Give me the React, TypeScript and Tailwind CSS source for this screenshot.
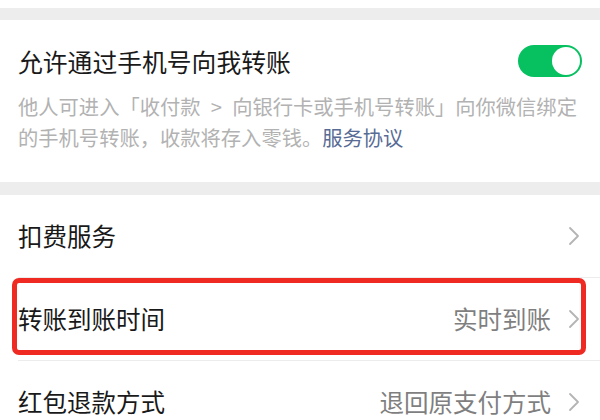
import { ReactNode } from "react";

const font = { fontFamily: '"Noto Sans CJK SC", "Noto Sans", sans-serif' };

function Chevron() {
  return (
    <svg width="12" height="20" viewBox="0 0 12 20" className="shrink-0">
      <polyline points="2,2 10,10 2,18" fill="none" stroke="#b4b4b4" strokeWidth="1.8" strokeLinecap="round" strokeLinejoin="round" />
    </svg>
  );
}

interface RowProps {
  label: string;
  value?: string;
  last?: boolean;
  children?: ReactNode;
}

function Row({ label, value, last, children }: RowProps) {
  return (
    <div className="relative">
      <div className="flex h-[82px] items-center pl-[18px] pr-[20px]">
        <span className="flex-1 text-[24.5px] text-[#191919]">{label}</span>
        {value && <span className="mr-[17px] text-[24.5px] text-[#7f7f7f]">{value}</span>}
        <Chevron />
      </div>
      {!last && <div className="ml-[18px] h-px bg-[#ececec]" />}
      {children}
    </div>
  );
}

export default function App() {
  return (
    <div className="h-[420px] w-[600px] overflow-hidden bg-[#ededed]" style={font}>
      <div className="h-2 bg-white" />
      <div className="h-3" />

      <section className="bg-white px-[18px] pt-[25px] pb-[29px]">
        <div className="flex h-8 items-center justify-between">
          <span className="text-[24.8px] leading-none text-[#191919]">允许通过手机号向我转账</span>
          <div className="flex h-8 w-16 items-center justify-end rounded-full bg-[#07c160] p-[2px]">
            <div className="h-7 w-7 rounded-full bg-white" />
          </div>
        </div>
        <p className="mt-[14px] whitespace-nowrap text-[20.3px] leading-[31px] text-[#b2b2b2]">
          他人可进入「收付款{"\u2002"}&gt;{"\u2002"}向银行卡或手机号转账」向你微信绑定
          <br />
          的手机号转账，收款将存入零钱。<span className="text-[#576b95]">服务协议</span>
        </p>
      </section>

      <div className="h-[13px]" />

      <div className="bg-white">
        <Row label="扣费服务" />
        <Row label="转账到账时间" value="实时到账">
          <div className="absolute left-[12px] top-0 h-[77px] w-[574px] rounded-[7px] border-[5px] border-[#ee2a22]" />
        </Row>
        <Row label="红包退款方式" value="退回原支付方式" last />
      </div>
    </div>
  );
}
